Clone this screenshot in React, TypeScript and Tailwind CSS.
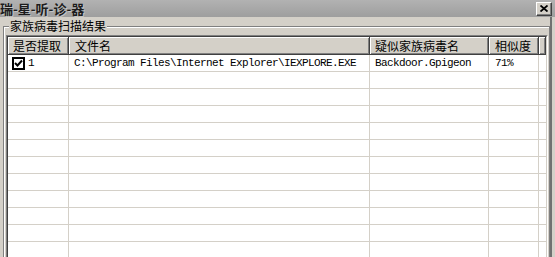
import * as React from 'react';

const cols = [
  { w: 'w-[61px]', label: '是否提取', pl: 'pl-[5px]' },
  { w: 'w-[301px]', label: '文件名', pl: 'pl-[6px]' },
  { w: 'w-[119px]', label: '疑似家族病毒名', pl: 'pl-[5px]' },
  { w: 'w-[50px]', label: '相似度', pl: 'pl-[6px]' },
];

const headCell =
  'h-full flex items-center bg-[#d4d0c8] border-r border-b border-[#404040] shadow-[inset_1px_1px_0_#ffffff,inset_-1px_-1px_0_#808080] text-[12px] leading-none text-black whitespace-nowrap';

const mono = "font-['Liberation_Mono',monospace] text-[11px] tracking-[-0.6px] text-black whitespace-nowrap";

const CheckBox: React.FC = () => (
  <div className="w-[13px] h-[13px] border-2 border-black bg-white flex items-center justify-center">
    <svg width="9" height="9" viewBox="0 0 9 9">
      <path d="M1 4 L3.5 6.5 L8 1.5" stroke="#000" strokeWidth="2" fill="none" />
    </svg>
  </div>
);

const App: React.FC = () => {
  const rows = Array.from({ length: 12 }, (_, i) => i);

  return (
    <div className="w-[555px] h-[257px] overflow-hidden bg-[#d4d0c8] font-['Noto_Sans_CJK_SC',sans-serif] shadow-[inset_-3px_0_0_#d4d0c8,inset_-5px_0_0_#707070]">
      {/* title bar */}
      <div className="h-[17px] bg-gradient-to-b from-[#b2b2b2] to-[#9e9e9e] flex items-center justify-between pr-[3px]">
        <span className="text-[13px] font-bold leading-none text-[#1c1c1c] [text-shadow:1px_1px_0_#c4c4c4]">瑞-星-听-诊-器</span>
        <button className="w-[16px] h-[14px] bg-[#d4d0c8] border border-t-white border-l-white border-r-[#404040] border-b-[#404040] shadow-[inset_-1px_-1px_0_#808080] flex items-center justify-center">
          <svg width="8" height="7" viewBox="0 0 8 7">
            <path d="M0.5 0.5 L7.5 6.5 M7.5 0.5 L0.5 6.5" stroke="#000" strokeWidth="1.8" fill="none" />
          </svg>
        </button>
      </div>

      {/* group box */}
      <fieldset className="mt-[3px] ml-[3px] w-[547px] h-[400px] border border-[#808080] shadow-[inset_1px_1px_0_#ffffff]">
        <legend className="ml-[5px] px-[1px] bg-[#d4d0c8] text-[12px] leading-[12px] text-black">家族病毒扫描结果</legend>

        <div className="mt-[3px] ml-[2px] w-[542px] border border-t-[#808080] border-l-[#808080] border-r-white border-b-white">
          <div className="border border-t-[#404040] border-l-[#404040] border-r-[#d4d0c8] border-b-[#d4d0c8] bg-white h-[380px]">
            {/* header */}
            <div className="flex h-[18px]">
              {cols.map((c) => (
                <div key={c.label} className={`${headCell} ${c.w} ${c.pl}`}>
                  {c.label}
                </div>
              ))}
              <div className={`${headCell} flex-1`}></div>
            </div>

            {/* rows */}
            {rows.map((i) => (
              <div key={i} className="flex h-[17px] border-b border-[#d4d0c8]">
                <div className={`${cols[0].w} h-full border-r border-[#d4d0c8] flex items-center pl-[4px] gap-[3px]`}>
                  {i === 0 && (
                    <>
                      <CheckBox />
                      <span className={mono}>1</span>
                    </>
                  )}
                </div>
                <div className={`${cols[1].w} h-full border-r border-[#d4d0c8] flex items-center pl-[5px]`}>
                  {i === 0 && <span className={mono}>C:\Program Files\Internet Explorer\IEXPLORE.EXE</span>}
                </div>
                <div className={`${cols[2].w} h-full border-r border-[#d4d0c8] flex items-center pl-[5px]`}>
                  {i === 0 && <span className={mono}>Backdoor.Gpigeon</span>}
                </div>
                <div className={`${cols[3].w} h-full border-r border-[#d4d0c8] flex items-center pl-[6px]`}>
                  {i === 0 && <span className={mono}>71%</span>}
                </div>
                <div className="flex-1 h-full"></div>
              </div>
            ))}
          </div>
        </div>
      </fieldset>
    </div>
  );
};

export default App;
